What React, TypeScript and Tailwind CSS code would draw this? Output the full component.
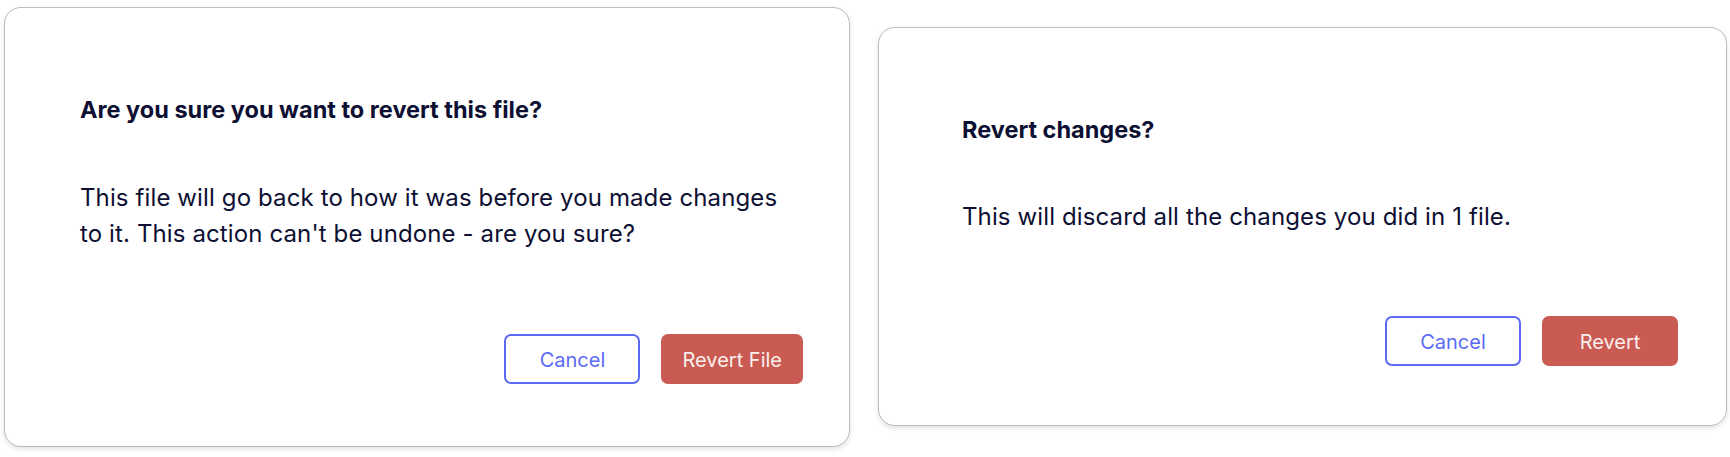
import React from "react";

function Card({
  title,
  body,
  confirm,
  cls,
  bodyCls,
}: {
  title: string;
  body: React.ReactNode;
  confirm: string;
  cls: string;
  bodyCls: string;
}) {
  return (
    <div
      className={`flex flex-col bg-white border border-[#bcbcbc] rounded-[17px] shadow-[0_2px_5px_rgba(0,0,0,0.12)] ${cls}`}
    >
      <h2 className="text-[23.5px] leading-[28px] font-bold text-[#0d1033]">{title}</h2>
      <p className={`text-[24px] leading-[36px] tracking-[0.12px] text-[#0d1033] ${bodyCls}`}>{body}</p>
      <div className="flex-1" />
      <div className="flex justify-end gap-[21px]">
        <button className="h-[50px] min-w-[136px] px-[21px] pt-[1px] rounded-[7px] border-2 border-[#5b6af4] bg-white text-[20px] text-[#5b6af4]">
          Cancel
        </button>
        <button className="h-[50px] min-w-[136px] px-[21px] pt-[1px] rounded-[7px] bg-[#c95b53] text-[20px] text-[#fbefed]">
          {confirm}
        </button>
      </div>
    </div>
  );
}

export default function App() {
  return (
    <div
      className="w-[1730px] h-[457px] bg-white flex items-start pl-[4px] gap-[28px]"
      style={{ fontFamily: "Inter, 'Noto Sans', sans-serif" }}
    >
      <Card
        cls="mt-[7px] w-[846px] h-[440px] pt-[88px] pb-[62px] pl-[75px] pr-[46px]"
        bodyCls="mt-[56px] max-w-[740px]"
        title="Are you sure you want to revert this file?"
        body={
          <>
            This file will go back to how it was before you made changes
            <br />
            to it. This action can't be undone - are you sure?
          </>
        }
        confirm="Revert File"
      />
      <Card
        cls="mt-[27px] w-[849px] h-[399px] pt-[88px] pb-[59px] pl-[83px] pr-[48px]"
        bodyCls="mt-[55px]"
        title="Revert changes?"
        body="This will discard all the changes you did in 1 file."
        confirm="Revert"
      />
    </div>
  );
}
